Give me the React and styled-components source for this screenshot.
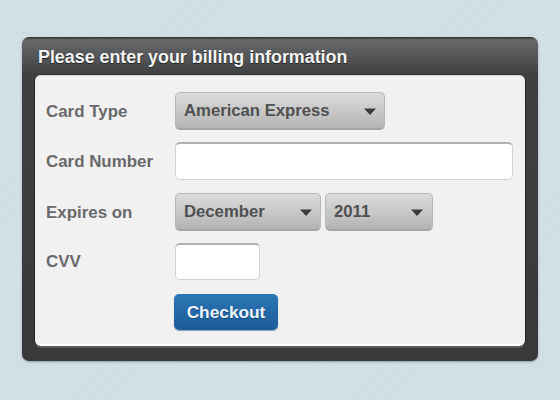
import React from "react";
import styled, { createGlobalStyle } from "styled-components";

const Global = createGlobalStyle`
  html, body { margin: 0; padding: 0; }
  body {
    width: 560px;
    height: 400px;
    overflow: hidden;
    font-family: "Liberation Sans", Arial, sans-serif;
  }
`;

const Page = styled.div`
  box-sizing: border-box;
  width: 560px;
  height: 400px;
  padding: 37px 22px 39px;
  background-color: #d0dfe4;
  background-image: repeating-linear-gradient(
    -45deg,
    #ccdce1 0,
    #ccdce1 1.5px,
    #d5e2e7 1.5px,
    #d5e2e7 3px
  );
`;

const Panel = styled.section`
  box-sizing: border-box;
  height: 324px;
  display: flex;
  flex-direction: column;
  border-radius: 7px;
  padding: 0 13px 15px;
  background: linear-gradient(to bottom, #2e2f30 0, #676869 3px, #3f4041 38px, #38393a 100%);
  box-shadow: 0 1px 2px rgba(60, 80, 90, 0.45);
`;

const Title = styled.h1`
  margin: 0;
  height: 38px;
  flex: none;
  padding: 3px 0 0 3px;
  box-sizing: border-box;
  display: flex;
  align-items: center;
  font-size: 17.85px;
  font-weight: 700;
  color: #f4f4f4;
  text-shadow: 0 1px 1px #222;
`;

const Body = styled.form`
  flex: 1;
  margin: 0;
  box-sizing: border-box;
  padding: 17px 11px 0;
  border-radius: 6px;
  background: #f1f1f2;
  border-bottom: 2px solid #fff;
  box-shadow:
    0 -1px 0 #2c2c2d,
    1px 0 0 #252526,
    -1px 0 0 #252526,
    0 2px 0 #5c5d5e,
    inset 0 1px 1px #d4d4d4;
  display: flex;
  flex-direction: column;
`;

const Row = styled.div`
  display: flex;
  align-items: center;
  gap: 4px;
  margin-top: ${(p) => p.$top || 0}px;
`;

const Label = styled.label`
  flex: none;
  box-sizing: border-box;
  width: 125px;
  padding-top: ${(p) => p.$drop || 0}px;
  font-size: 16.9px;
  font-weight: 700;
  color: #69696a;
`;

const Select = styled.div`
  box-sizing: border-box;
  width: ${(p) => p.$width}px;
  height: 38px;
  display: flex;
  align-items: center;
  justify-content: space-between;
  padding: 0 ${(p) => p.$right || 8}px 0 8px;
  border-radius: 5px;
  border: 1px solid #b8b8b8;
  border-bottom: 2px solid #a4a4a4;
  background: linear-gradient(to bottom, #dcdcdc, #b4b4b4);
  font-size: 16.7px;
  font-weight: 700;
  color: #505051;
`;

const Arrow = styled.svg`
  width: 12px;
  height: 7px;
  flex: none;
  margin-top: 1px;
`;

const TextInput = styled.input`
  box-sizing: border-box;
  width: ${(p) => p.$width}px;
  height: ${(p) => p.$height || 38}px;
  padding: 0 8px;
  border: 1px solid #d2d2d2;
  border-top: 2px solid #b0b0b0;
  border-radius: 5px;
  background: #fff;
  outline: none;
`;

const Checkout = styled.button`
  box-sizing: border-box;
  width: 104px;
  height: 36px;
  margin-left: -1px;
  padding: 0;
  border: 0;
  border-radius: 5px;
  background: linear-gradient(to bottom, #2c76b4, #1c5c9a);
  box-shadow: 0 1px 1px rgba(20, 60, 100, 0.45);
  font-family: inherit;
  font-size: 17.3px;
  font-weight: 700;
  color: #eef4f9;
  text-shadow: 0 1px 1px #134a7c;
`;

const Spacer = styled.span`
  flex: none;
  width: 125px;
`;

function Caret() {
  return (
    <Arrow viewBox="0 0 12 7">
      <path d="M0 0.5H12L6 7Z" fill="#3c3c3d" />
    </Arrow>
  );
}

function Dropdown({ width, value, right }) {
  return (
    <Select $width={width} $right={right}>
      <span>{value}</span>
      <Caret />
    </Select>
  );
}

export default function App() {
  return (
    <Page>
      <Global />
      <Panel>
        <Title>Please enter your billing information</Title>
        <Body>
          <Row>
            <Label $drop={2}>Card Type</Label>
            <Dropdown width={210} value="American Express" />
          </Row>
          <Row $top={12}>
            <Label $drop={2}>Card Number</Label>
            <TextInput $width={338} />
          </Row>
          <Row $top={13}>
            <Label $drop={2}>Expires on</Label>
            <Dropdown width={146} value="December" />
            <Dropdown width={108} value="2011" right={9} />
          </Row>
          <Row $top={12}>
            <Label>CVV</Label>
            <TextInput $width={85} $height={37} />
          </Row>
          <Row $top={14}>
            <Spacer />
            <Checkout type="button">Checkout</Checkout>
          </Row>
        </Body>
      </Panel>
    </Page>
  );
}
